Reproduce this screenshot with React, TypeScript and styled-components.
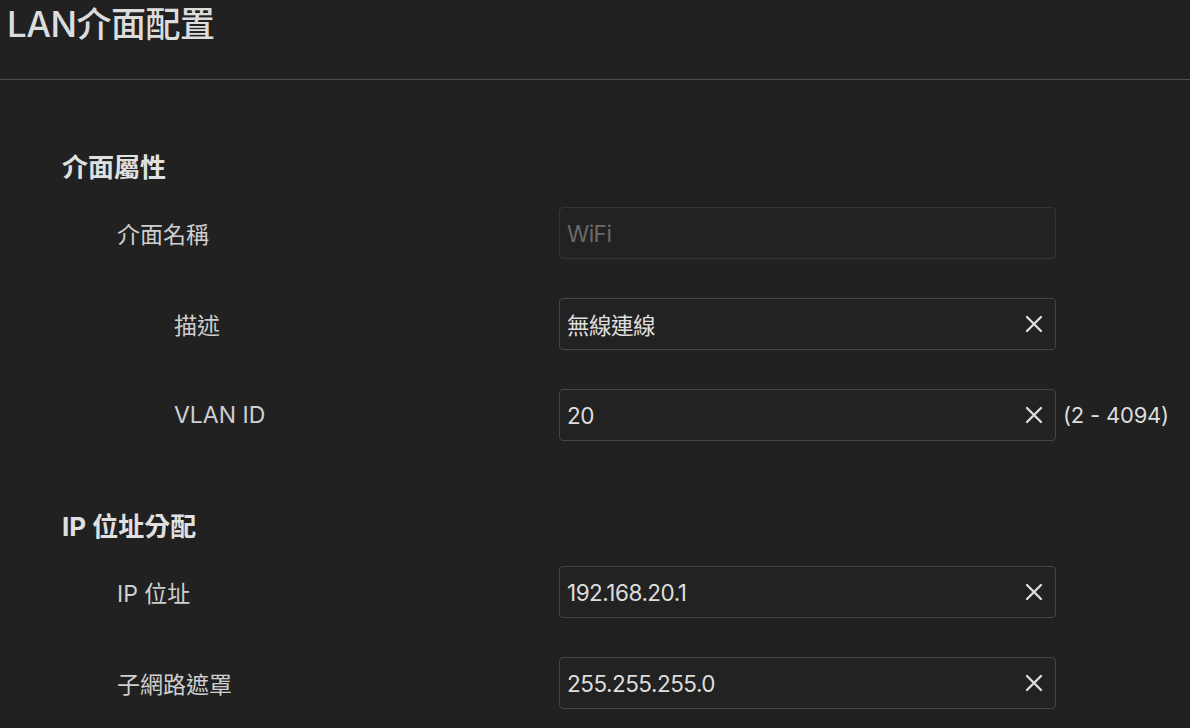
import React from 'react'
import styled, { createGlobalStyle } from 'styled-components'

const GlobalStyle = createGlobalStyle`
  html, body {
    margin: 0;
    padding: 0;
    background: #212121;
    font-family: Inter, "Noto Sans CJK TC", sans-serif;
    color: #d6d6d6;
  }
`

const Page = styled.div`
  width: 1190px;
  min-height: 728px;
  background: #212121;
  overflow: hidden;
`

const Header = styled.header`
  height: 79px;
  border-bottom: 1px solid #4d4d4d;
  padding-left: 7px;
  box-sizing: content-box;
`

const Title = styled.h1`
  margin: 0;
  font-size: 35px;
  font-weight: 500;
  line-height: 48px;
  color: #dcdcdc;
  letter-spacing: -0.5px;
`

const Body = styled.main`
  padding: 72px 0 0 62px;
  display: flex;
  flex-direction: column;
  gap: 70px;
`

const Section = styled.section`
  display: flex;
  flex-direction: column;
`

const SectionTitle = styled.h2`
  margin: 0 0 23px;
  font-size: 26px;
  font-weight: 700;
  line-height: 32px;
  color: #e0e0e0;
`

const Rows = styled.div`
  display: flex;
  flex-direction: column;
  gap: 39px;
`

const Row = styled.div`
  display: grid;
  grid-template-columns: 497px 497px auto;
  align-items: center;
  height: 52px;
`

const Label = styled.label<{ $indent: number }>`
  padding-left: ${p => p.$indent}px;
  font-size: 23px;
  color: #cfcfcf;
`

const Field = styled.div<{ $disabled?: boolean }>`
  display: flex;
  align-items: center;
  height: 52px;
  box-sizing: border-box;
  border: 1px solid ${p => (p.$disabled ? '#353535' : '#454545')};
  border-radius: 4px;
  background: #222222;
  padding: 0 8px 0 7px;
`

const Input = styled.input`
  flex: 1;
  min-width: 0;
  border: none;
  outline: none;
  background: transparent;
  font-family: Inter, "Noto Sans CJK TC", sans-serif;
  font-size: 22.5px;
  letter-spacing: -0.5px;
  color: #dedede;
  padding: 0;

  &:disabled {
    color: #6a6a6a;
  }
`

const ClearButton = styled.button`
  display: flex;
  align-items: center;
  justify-content: center;
  width: 26px;
  height: 26px;
  padding: 0;
  border: none;
  background: transparent;
  color: #dcdcdc;
  cursor: pointer;
`

const Hint = styled.span`
  padding-left: 7px;
  font-size: 22px;
  color: #dcdcdc;
  letter-spacing: -0.2px;
  white-space: nowrap;
`

const ClearIcon = () => (
  <svg width="18" height="18" viewBox="0 0 18 18" fill="none">
    <path d="M2 2L16 16M16 2L2 16" stroke="currentColor" strokeWidth="2.4" strokeLinecap="round" />
  </svg>
)

type FieldRow = {
  label: string
  indent: number
  value: string
  disabled?: boolean
  hint?: string
}

const sections: { title: string; rows: FieldRow[] }[] = [
  {
    title: '介面屬性',
    rows: [
      { label: '介面名稱', indent: 55, value: 'WiFi', disabled: true },
      { label: '描述', indent: 112, value: '無線連線' },
      { label: 'VLAN ID', indent: 112, value: '20', hint: '(2 - 4094)' },
    ],
  },
  {
    title: 'IP 位址分配',
    rows: [
      { label: 'IP 位址', indent: 55, value: '192.168.20.1' },
      { label: '子網路遮罩', indent: 55, value: '255.255.255.0' },
    ],
  },
]

export default function App() {
  return (
    <Page>
      <GlobalStyle />
      <Header>
        <Title>LAN介面配置</Title>
      </Header>
      <Body>
        {sections.map(s => (
          <Section key={s.title}>
            <SectionTitle>{s.title}</SectionTitle>
            <Rows>
              {s.rows.map(r => (
                <Row key={r.label}>
                  <Label $indent={r.indent}>{r.label}</Label>
                  <Field $disabled={r.disabled}>
                    <Input value={r.value} disabled={r.disabled} readOnly />
                    {!r.disabled && (
                      <ClearButton aria-label="clear">
                        <ClearIcon />
                      </ClearButton>
                    )}
                  </Field>
                  {r.hint ? <Hint>{r.hint}</Hint> : <span />}
                </Row>
              ))}
            </Rows>
          </Section>
        ))}
      </Body>
    </Page>
  )
}
